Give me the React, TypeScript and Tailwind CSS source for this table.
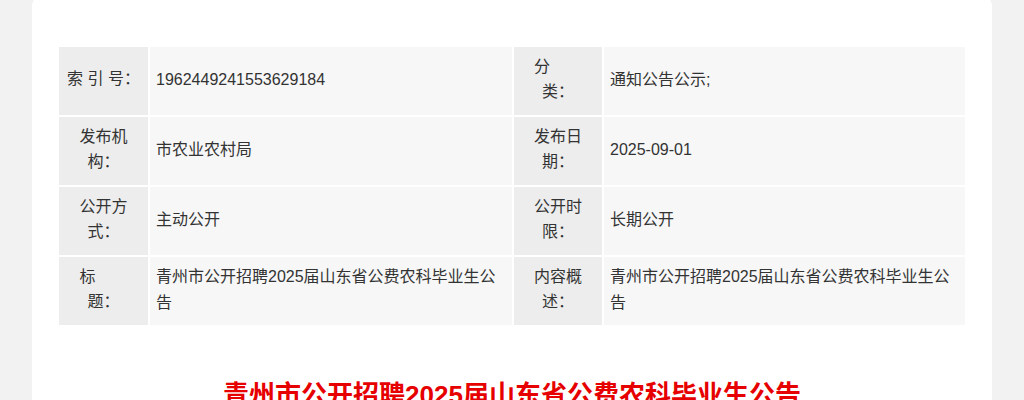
import React from "react";

interface Label {
  text: string;
  // first line kept short and left-set, as in the source page's spaced labels
  split?: [string, string];
}

interface InfoRow {
  label1: Label;
  value1: string;
  label2: Label;
  value2: string;
}

const ROWS: InfoRow[] = [
  {
    label1: { text: "索 引 号：" },
    value1: "1962449241553629184",
    label2: { text: "分类：", split: ["分", "类："] },
    value2: "通知公告公示;",
  },
  { label1: { text: "发布机构：" }, value1: "市农业农村局", label2: { text: "发布日期：" }, value2: "2025-09-01" },
  { label1: { text: "公开方式：" }, value1: "主动公开", label2: { text: "公开时限：" }, value2: "长期公开" },
  {
    label1: { text: "标题：", split: ["标", "题："] },
    value1: "青州市公开招聘2025届山东省公费农科毕业生公告",
    label2: { text: "内容概述：" },
    value2: "青州市公开招聘2025届山东省公费农科毕业生公告",
  },
];

const labelCls =
  "bg-[#ededed] text-center align-middle px-[6px] pb-[5px] text-[16px] leading-[25px] text-[#333]";
const valueCls =
  "bg-[#f7f7f7] text-left align-middle px-[6px] pb-[2px] text-[16px] leading-[26px] text-[#333]";

function LabelCell({ label }: { label: Label }) {
  if (!label.split) return <td className={labelCls}>{label.text}</td>;
  return (
    <td className={labelCls}>
      <span className="block">
        <span className="inline-block w-[48px] text-left">{label.split[0]}</span>
      </span>
      <span className="block">{label.split[1]}</span>
    </td>
  );
}

export default function App() {
  return (
    <div
      className="min-h-screen bg-[#f2f2f2] px-[32px]"
      style={{ fontFamily: '"Liberation Sans", "Noto Sans CJK SC", sans-serif' }}
    >
      <div className="-mt-[4px] bg-white rounded-t-[10px] px-[25px] pt-[49px] pb-10">
        {/* Document meta table */}
        <table className="w-[910px] table-fixed border-separate border-spacing-[2px]">
          <colgroup>
            <col className="w-[89px]" />
            <col className="w-[362px]" />
            <col className="w-[88px]" />
            <col className="w-[361px]" />
          </colgroup>
          <tbody>
            {ROWS.map((row) => (
              <tr key={row.label1.text} className="h-[68px]">
                <LabelCell label={row.label1} />
                <td className={valueCls}>{row.value1}</td>
                <LabelCell label={row.label2} />
                <td className={valueCls}>{row.value2}</td>
              </tr>
            ))}
          </tbody>
        </table>

        <h1 className="mt-[52px] text-center text-[26px] font-bold leading-[32px] text-[#e60000]">
          青州市公开招聘2025届山东省公费农科毕业生公告
        </h1>
      </div>
    </div>
  );
}
